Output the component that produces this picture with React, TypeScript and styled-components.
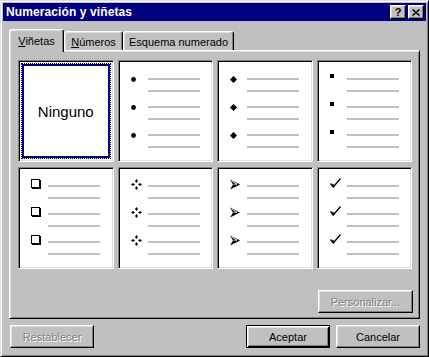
import React from "react";
import styled, { createGlobalStyle } from "styled-components";

const GlobalStyle = createGlobalStyle`
  html, body { margin: 0; padding: 0; background: #c0c0c0; }
  * { box-sizing: border-box; }
`;

const Window = styled.div`
  width: 429px;
  height: 357px;
  background: #c0c0c0;
  border: 1px solid;
  border-color: #dfdfdf #000 #000 #dfdfdf;
  box-shadow: inset 1px 1px #fff, inset -1px -1px #808080;
  padding: 2px;
  display: flex;
  flex-direction: column;
  font-family: "Liberation Sans", Arial, sans-serif;
  font-size: 11px;
  color: #000;
`;

const TitleBar = styled.div`
  height: 18px;
  flex: none;
  background: #000080;
  color: #fff;
  display: flex;
  align-items: center;
  padding: 0 2px 0 3px;
  font-weight: bold;
  font-size: 12px;
`;

const TitleText = styled.span`
  flex: 1;
  letter-spacing: 0.1px;
`;

const TitleButtons = styled.div`
  display: flex;
  gap: 2px;
`;

const TitleButton = styled.div`
  width: 16px;
  height: 14px;
  background: #c0c0c0;
  border: 1px solid;
  border-color: #fff #000 #000 #fff;
  box-shadow: inset -1px -1px #808080, inset 1px 1px #dfdfdf;
  color: #000;
  display: flex;
  align-items: center;
  justify-content: center;
  font-size: 11px;
  font-weight: bold;
  line-height: 1;
`;

const Body = styled.div`
  flex: 1;
  display: flex;
  flex-direction: column;
  padding: 8px 6px 6px 6px;
`;

const TabRow = styled.div`
  height: 21px;
  display: flex;
  align-items: flex-end;
`;

const Tab = styled.div<{ $active?: boolean; $w: number }>`
  position: relative;
  z-index: ${(p) => (p.$active ? 1 : 0)};
  width: ${(p) => p.$w}px;
  height: ${(p) => (p.$active ? 23 : 19)}px;
  margin-bottom: ${(p) => (p.$active ? -2 : 0)}px;
  padding-top: ${(p) => (p.$active ? 4 : 3)}px;
  line-height: 14px;
  text-align: center;
  background: #c0c0c0;
  border: 1px solid;
  border-bottom: none;
  border-color: #fff #000 transparent #fff;
  border-radius: 3px 3px 0 0;
  box-shadow: inset -1px 0 #808080, inset 1px 1px #dfdfdf;
  white-space: nowrap;
`;

const Panel = styled.div`
  height: 269px;
  border: 1px solid;
  border-color: #fff #000 #000 #fff;
  box-shadow: inset 1px 1px #dfdfdf, inset -1px -1px #808080;
  padding: 9px 7px 5px 8px;
  display: flex;
  flex-direction: column;
`;

const Grid = styled.div`
  display: grid;
  grid-template-columns: repeat(4, 1fr);
  grid-template-rows: 102px 102px;
  column-gap: 4px;
  row-gap: 5px;
`;

const Cell = styled.div<{ $selected?: boolean }>`
  background: #fff;
  border: 1px solid;
  border-color: #808080 #fff #fff #808080;
  box-shadow: inset 1px 1px #000, inset -1px -1px #dfdfdf;
  padding: ${(p) => (p.$selected ? "2px" : "13px 0 0 12px")};
  display: flex;
  flex-direction: column;
  gap: 10px;
`;

const Selection = styled.div`
  flex: 1;
  border: 1px dotted #000;
  display: flex;
`;

const SelectionInner = styled.div`
  flex: 1;
  border: 2px solid #000080;
  display: flex;
  align-items: center;
  justify-content: center;
  font-size: 15px;
`;

const Item = styled.div`
  display: flex;
  flex-direction: column;
`;

const ItemHead = styled.div`
  height: 10px;
  display: flex;
  align-items: center;
`;

const BulletBox = styled.span<{ $dy: number }>`
  width: 17px;
  flex: none;
  display: flex;
  align-items: center;
  transform: translateY(${(p) => p.$dy}px);
`;

const Line = styled.div<{ $indent?: boolean }>`
  width: 52px;
  height: 2px;
  background: #c0c0c0;
  margin-left: ${(p) => (p.$indent ? 17 : 0)}px;
  margin-top: ${(p) => (p.$indent ? 6 : 0)}px;
`;

const Footer = styled.div`
  display: flex;
  justify-content: flex-end;
  margin-top: 21px;
  margin-right: -1px;
`;

const ButtonRow = styled.div`
  display: flex;
  gap: 6px;
  margin-top: 6px;
  padding-left: 1px;
`;

const Spacer = styled.div`
  flex: 1;
`;

const Button = styled.button<{ $default?: boolean; $w: number }>`
  width: ${(p) => p.$w}px;
  height: 23px;
  padding: 0;
  background: #c0c0c0;
  font-family: "Liberation Sans", Arial, sans-serif;
  font-size: 11px;
  color: #000;
  border: 1px solid;
  border-color: ${(p) => (p.$default ? "#000" : "#fff #000 #000 #fff")};
  box-shadow: ${(p) =>
    p.$default
      ? "inset 1px 1px #fff, inset -1px -1px #000, inset 2px 2px #dfdfdf, inset -2px -2px #808080"
      : "inset -1px -1px #808080, inset 1px 1px #dfdfdf"};
  &:disabled {
    color: #808080;
    text-shadow: 1px 1px #fff;
  }
`;

type Kind = "dot" | "diamond" | "square" | "box" | "quad" | "arrow" | "check";

const shift: Record<Kind, number> = {
  dot: 0,
  diamond: 0,
  square: -3,
  box: -2,
  quad: -2,
  arrow: -2,
  check: -3,
};

function Glyph({ kind }: { kind: Kind }) {
  switch (kind) {
    case "dot":
      return (
        <svg width="5" height="5" viewBox="0 0 5 5">
          <circle cx="2.5" cy="2.5" r="2.4" fill="#000" />
        </svg>
      );
    case "diamond":
      return (
        <svg width="7" height="7" viewBox="0 0 7 7">
          <polygon points="3.5,0 7,3.5 3.5,7 0,3.5" fill="#000" />
        </svg>
      );
    case "square":
      return (
        <svg width="4" height="4" viewBox="0 0 4 4">
          <rect width="4" height="4" fill="#000" />
        </svg>
      );
    case "box":
      return (
        <svg width="10" height="10" viewBox="0 0 10 10">
          <rect x="1" y="1" width="9" height="9" fill="#000" />
          <rect x="0" y="0" width="9" height="9" fill="#000" />
          <rect x="1" y="1" width="7" height="7" fill="#fff" />
        </svg>
      );
    case "quad":
      return (
        <svg width="11" height="11" viewBox="0 0 11 11">
          <polygon points="5.5,0 7,2 5.5,4 4,2" fill="#000" />
          <polygon points="5.5,7 7,9 5.5,11 4,9" fill="#000" />
          <polygon points="0,5.5 2,4 4,5.5 2,7" fill="#000" />
          <polygon points="7,5.5 9,4 11,5.5 9,7" fill="#000" />
        </svg>
      );
    case "arrow":
      return (
        <svg width="10" height="11" viewBox="0 0 10 11">
          <polygon points="0,0.5 10,5.5 0,10.5 3,5.5" fill="#000" />
          <polyline points="1.5,2 7,5.2 3.6,5.2" fill="none" stroke="#fff" strokeWidth="0.8" />
        </svg>
      );
    case "check":
      return (
        <svg width="11" height="10" viewBox="0 0 11 10">
          <path d="M0.5 5.5 L3.3 9 L10.5 0.5" fill="none" stroke="#000" strokeWidth="1.4" />
          <path d="M2.5 6 L3.6 8.8" fill="none" stroke="#000" strokeWidth="1.6" />
        </svg>
      );
  }
}

function BulletCell({ kind }: { kind: Kind }) {
  return (
    <Cell>
      {[0, 1, 2].map((i) => (
        <Item key={i}>
          <ItemHead>
            <BulletBox $dy={shift[kind]}>
              <Glyph kind={kind} />
            </BulletBox>
            <Line />
          </ItemHead>
          <Line $indent />
        </Item>
      ))}
    </Cell>
  );
}

function CloseIcon() {
  return (
    <svg width="8" height="7" viewBox="0 0 8 7">
      <path d="M0.5 0.5 L7.5 6.5 M7.5 0.5 L0.5 6.5" stroke="#000" strokeWidth="1.5" />
    </svg>
  );
}

export default function App() {
  return (
    <>
      <GlobalStyle />
      <Window>
        <TitleBar>
          <TitleText>Numeración y viñetas</TitleText>
          <TitleButtons>
            <TitleButton>?</TitleButton>
            <TitleButton>
              <CloseIcon />
            </TitleButton>
          </TitleButtons>
        </TitleBar>
        <Body>
          <TabRow>
            <Tab $active $w={55}>
              <u>V</u>iñetas
            </Tab>
            <Tab $w={59}>
              <u>N</u>úmeros
            </Tab>
            <Tab $w={111}>Esquema numerado</Tab>
          </TabRow>
          <Panel>
            <Grid>
              <Cell $selected>
                <Selection>
                  <SelectionInner>Ninguno</SelectionInner>
                </Selection>
              </Cell>
              <BulletCell kind="dot" />
              <BulletCell kind="diamond" />
              <BulletCell kind="square" />
              <BulletCell kind="box" />
              <BulletCell kind="quad" />
              <BulletCell kind="arrow" />
              <BulletCell kind="check" />
            </Grid>
            <Footer>
              <Button $w={95} disabled>
                Personalizar...
              </Button>
            </Footer>
          </Panel>
          <ButtonRow>
            <Button $w={84} disabled>
              Restablecer
            </Button>
            <Spacer />
            <Button $w={84} $default>
              Aceptar
            </Button>
            <Button $w={84}>Cancelar</Button>
          </ButtonRow>
        </Body>
      </Window>
    </>
  );
}
